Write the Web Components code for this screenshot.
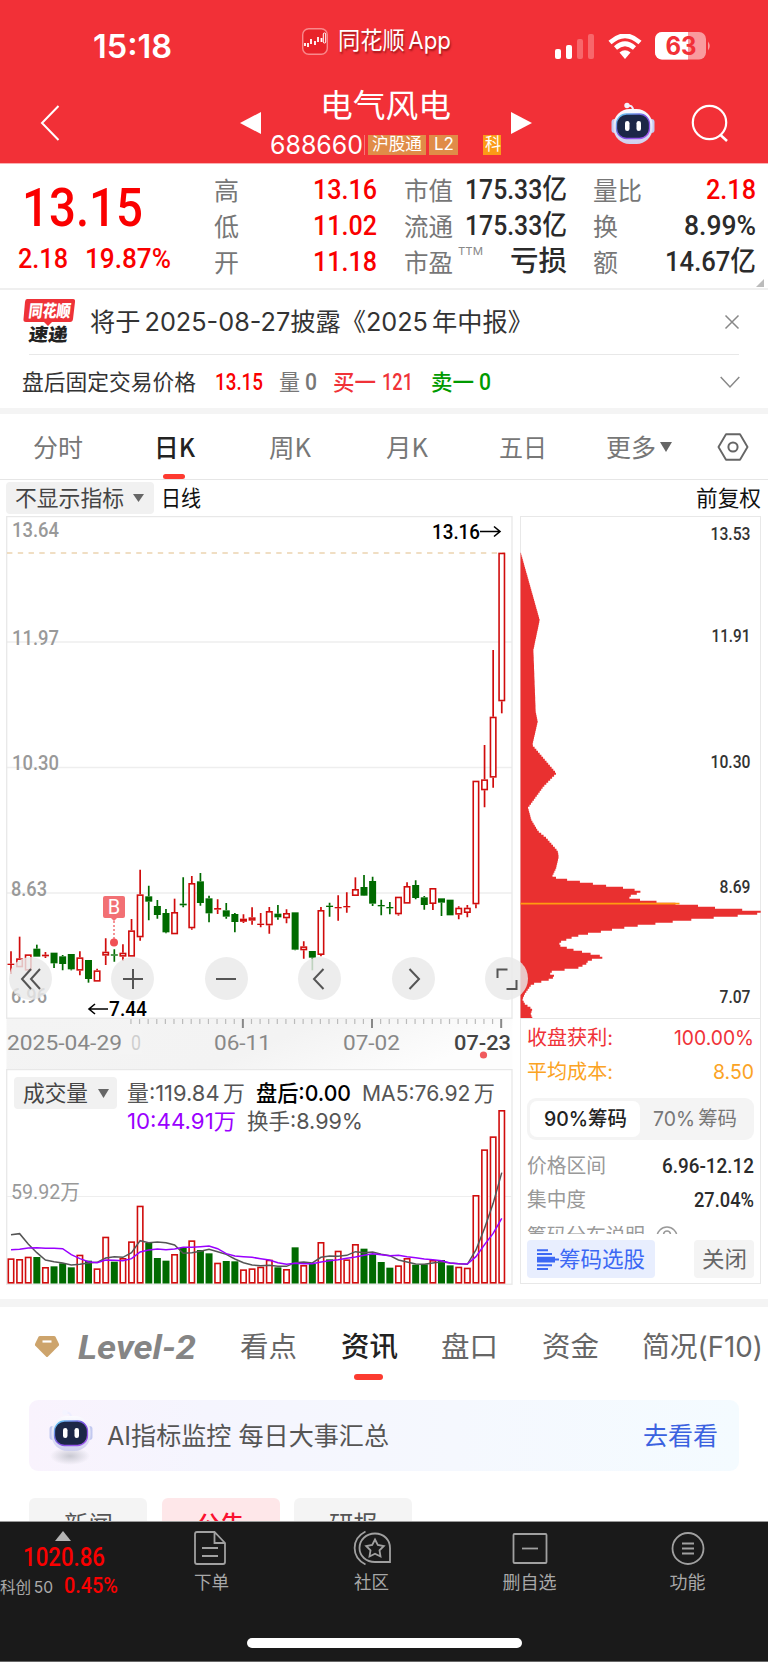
<!DOCTYPE html>
<html lang="zh-CN">
<head>
<meta charset="utf-8">
<title>电气风电 688660</title>
<style>
  html, body { margin: 0; padding: 0; }
  body {
    width: 768px;
    height: 1662px;
    overflow: hidden;
    background: #fff;
    color: #333;
    font-family: Inter, "Noto Sans CJK SC", sans-serif;
    font-size: 22px;
    line-height: 1;
  }
</style>
</head>
<body>
<stock-page></stock-page>

<script>
const DIN = `.din { font-family: Roboto, "Noto Sans CJK SC", sans-serif; font-weight: 500; }`;
const RED = "#fa0000";
const UP = "#d00c0c";
const DOWN = "#006a00";

// Base class: puts the markup and the styles in an open shadow root
class BaseElement extends HTMLElement {
  constructor() {
    super();
    this.attachShadow({ mode: "open" });
  }

  connectedCallback() {
    this.shadowRoot.innerHTML = `<style>:host { display: block; box-sizing: border-box; } ${DIN} ${this.styles()}</style>${this.markup()}`;
  }

  styles() { return ""; }
  markup() { return "<slot></slot>"; }
}

// Text squeezed or stretched horizontally to a given width
class FitText extends HTMLElement {
  constructor() {
    super();
    this.attachShadow({ mode: "open" });
  }

  connectedCallback() {
    const width = Number(this.getAttribute("w"));
    const gap = Number(this.getAttribute("gap") || 0);
    this.shadowRoot.innerHTML = `
      <style>
        :host { display: block; flex: none; width: ${width}px; margin-left: ${gap}px; white-space: nowrap; line-height: 1; word-spacing: -.12em; }
        span { display: inline-block; transform-origin: 0 50%; vertical-align: top; }
      </style>
      <span><slot></slot></span>
    `;
    const span = this.shadowRoot.querySelector("span");
    const natural = span.getBoundingClientRect().width;
    if (natural) {
      span.style.transform = `scaleX(${width / natural})`;
    }
  }
}

class RobotIcon extends BaseElement {
  styles() {
    return `svg { display: block; }`;
  }

  markup() {
    return `
      <svg width="44" height="56" viewBox="0 0 44 56">
        <defs>
          <radialGradient id="shade"><stop offset="0" stop-color="#c9c9d2"/><stop offset="1" stop-color="#c9c9d2" stop-opacity="0"/></radialGradient>
          <linearGradient id="rim" x1="0" y1="0" x2="1" y2="1"><stop offset="0" stop-color="#62d5f0"/><stop offset=".5" stop-color="#7a4de0"/><stop offset="1" stop-color="#a75cf0"/></linearGradient>
          <linearGradient id="shell" x1="0" y1="0" x2="0" y2="1"><stop offset="0" stop-color="#fbfbff"/><stop offset="1" stop-color="#cfd0ee"/></linearGradient>
        </defs>
        ${this.hasAttribute("shadow") ? `<ellipse cx="21" cy="47" rx="20" ry="9" fill="url(#shade)"/>` : ""}
        <path d="M22 9C22 4 20 3 16 4" fill="none" stroke="#eef" stroke-width="2"/>
        <circle cx="16" cy="3.500" r="2.700" fill="#f4f4ff"/>
        <rect x="0.500" y="17" width="6" height="14" rx="3" fill="#c3c9f0"/>
        <rect x="37.500" y="17" width="6" height="14" rx="3" fill="#c3c9f0"/>
        <rect x="2.500" y="7" width="39" height="35" rx="16" fill="url(#shell)"/>
        <rect x="5.500" y="12" width="33" height="24.500" rx="10" fill="#1c2747" stroke="url(#rim)" stroke-width="1.300"/>
        <rect x="14" y="19" width="4.500" height="10" rx="2.200" fill="#fff"/>
        <rect x="25.500" y="19" width="4.500" height="10" rx="2.200" fill="#fff"/>
      </svg>
    `;
  }
}

class PhoneHeader extends BaseElement {
  styles() {
    return `
      :host { height: 164px; padding-top: 21px; background: #f23037; color: #fff; border-bottom: 1px solid #fbb0b2; }
      svg { display: block; flex: none; }
      .status { display: flex; align-items: center; height: 50px; padding-left: 93px; }
      .time { font-size: 32px; font-weight: 600; margin-top: 1px; }
      .app { display: flex; align-items: center; gap: 10px; margin: 0 2px 10px 130px; font-size: 24px; text-shadow: 1px 2px 2px rgba(90, 0, 0, .55); }
      .signal { margin-left: 102px; }
      .wifi { margin-left: 14px; }
      .battery { margin-left: 13px; }
      .title { display: flex; align-items: center; height: 81px; margin-top: 11px; padding-left: 40px; }
      .name { display: flex; flex-direction: column; gap: 10px; width: 231px; margin: 0 10px 0 9px; }
      .name > fit-text { font-size: 32px; margin: 0 auto; height: 34px; }
      .code { display: flex; align-items: center; height: 22px; font-size: 26px; }
      .tag { display: flex; align-items: center; justify-content: center; height: 20px; font-size: 17px; background: #e08c48; overflow: hidden; }
    `;
  }

  markup() {
    return `
      <div class="status">
        <fit-text class="time" w="79">15:18</fit-text>
        <div class="app">
          <svg width="26" height="27" viewBox="0 0 26 27">
            <rect x=".7" y=".7" width="24.600" height="25.600" rx="6" fill="#e8232a" stroke="#f9898c" stroke-width="1.400"/>
            <path d="M3 15v3M6 15v4M9 11v5M13 13v4M16 9v5M19.500 10v4" stroke="#fff" stroke-width="1.800"/>
            <rect x="21.300" y="5" width="2.400" height="10" rx="1" fill="none" stroke="#fff"/>
          </svg>
          <fit-text w="113">同花顺 App</fit-text>
        </div>
        <svg class="signal" width="39" height="25">
          <rect y="15" width="6" height="10" rx="2" fill="#fff"/>
          <rect x="11" y="11" width="6" height="14" rx="2" fill="#fff"/>
          <rect x="22" y="5" width="6" height="20" rx="2" fill="#f7676b"/>
          <rect x="33" width="6" height="25" rx="2" fill="#f7676b"/>
        </svg>
        <svg class="wifi" width="34" height="25" viewBox="0 0 34 25">
          <path d="M2 8.500Q17-5 32 8.500M7.500 14Q17 5.500 26.500 14" fill="none" stroke="#fff" stroke-width="4.600"/>
          <path d="M11.500 18.500Q17 14 22.500 18.500L17 25Z" fill="#fff"/>
        </svg>
        <svg class="battery" width="57" height="28" viewBox="0 0 57 28">
          <clipPath id="cell"><rect width="51" height="27.500" rx="7"/></clipPath>
          <g clip-path="url(#cell)"><rect width="51" height="28" fill="#f99b9e"/><rect width="33" height="28" fill="#fff"/></g>
          <path d="M53 9.500q3.500 4.500 0 9z" fill="#f99b9e"/>
          <text x="10.500" y="22.500" textLength="31" lengthAdjust="spacingAndGlyphs" font-size="25" font-weight="700" fill="#f23037">63</text>
        </svg>
      </div>
      <div class="title">
        <svg width="20" height="38" viewBox="0 0 20 38"><path d="M18.500 2 2 19l16.500 17" fill="none" stroke="#fff" stroke-width="2"/></svg>
        <svg width="21" height="24" style="margin-left:180px"><path d="M0 12 21 1v22z" fill="#fff"/></svg>
        <div class="name">
          <fit-text w="131">电气风电</fit-text>
          <div class="code">
            <fit-text w="93">688660</fit-text>
            <div style="width:1px;height:20px;background:#f7777b;margin:0 3px 0 1px"></div>
            <div class="tag" style="width:58px"><fit-text w="50">沪股通</fit-text></div>
            <div class="tag" style="width:29px;margin-left:3px"><fit-text w="20">L2</fit-text></div>
            <div class="tag" style="width:18px;margin-left:25px;background:#fb9a17;justify-content:flex-start"><fit-text w="16" gap="2">科</fit-text></div>
          </div>
        </div>
        <svg width="21" height="24"><path d="M21 12 0 1v22z" fill="#fff"/></svg>
        <robot-icon style="margin:15px 0 0 79px"></robot-icon>
        <svg width="38" height="38" viewBox="0 0 38 38" style="margin-left:36px"><circle cx="18.500" cy="18.500" r="16.700" fill="none" stroke="#fff" stroke-width="2.200"/><path d="m29.500 31 6.500 6" stroke="#fff" stroke-width="2.500"/></svg>
      </div>
    `;
  }
}

class QuoteStats extends BaseElement {
  styles() {
    return `
      :host { position: relative; display: flex; height: 126px; padding: 8px 12px 0 18px; border-bottom: 2px solid #efefef; }
      .price { width: 196px; color: ${RED}; }
      .last { display: flex; align-items: center; height: 72px; font-size: 53px; }
      .change { display: flex; align-items: center; height: 34px; margin-top: -2px; font-size: 27px; }
      .cols { display: grid; grid-template-columns: 163px 163px 163px; column-gap: 26.500px; grid-auto-rows: 36px; }
      .stat { display: flex; align-items: center; justify-content: space-between; font-size: 28px; color: #2b2b2b; }
      .label { font-size: 25px; color: #777; font-family: "Noto Sans CJK SC"; margin-top: -2px; }
      .up { color: ${RED}; }
      sup { align-self: flex-start; font-size: 11px; color: #888; margin: 2px auto 0 5px; }
      i { position: absolute; right: 4px; bottom: 1px; border: 4.500px solid transparent; border-right-color: #bbb; border-bottom-color: #bbb; }
    `;
  }

  markup() {
    const stats = [
      ["高", 25, "13.16", 64, 1], ["市值", 49, "175.33亿", 102], ["量比", 49, "2.18", 50, 1],
      ["低", 25, "11.02", 64, 1], ["流通", 49, "175.33亿", 102], ["换", 25, "8.99%", 72],
      ["开", 25, "11.18", 64, 1], ["市盈", 49, "亏损", 57], ["额", 25, "14.67亿", 91],
    ];
    return `
      <div class="price">
        <div class="last din"><fit-text w="121" gap="4">13.15</fit-text></div>
        <div class="change din"><fit-text w="50">2.18</fit-text><fit-text w="86" gap="17">19.87%</fit-text></div>
      </div>
      <div class="cols">
        ${stats.map(([label, lw, value, vw, up]) => `
          <div class="stat">
            <fit-text class="label" w="${lw}">${label}</fit-text>
            ${label === "市盈" ? `<sup><fit-text w="25">TTM</fit-text></sup>` : ""}
            <fit-text class="din ${up ? "up" : ""}" w="${vw}">${value}</fit-text>
          </div>`).join("")}
      </div>
      <i></i>
    `;
  }
}

class NoticeList extends BaseElement {
  styles() {
    return `
      :host { height: 124px; border-bottom: 6px solid #f4f4f4; }
      svg { display: block; flex: none; overflow: visible; }
      .row { display: flex; align-items: center; }
      .news { height: 64px; box-sizing: border-box; margin-left: 22px; font-size: 25px; }
      .line { height: 1px; margin: 0 29px; background: #e8e8e8; }
      .fixed { height: 54px; margin-left: 22px; font-size: 22px; }
      .num { font-size: 23px; }
    `;
  }

  markup() {
    return `
      <div class="row news">
        <svg width="54" height="48" viewBox="0 0 54 48" font-family="Noto Sans CJK SC" font-weight="900">
          <path d="M5 1h46q2.500 0 2 3l-2 17q-.3 3-3 3H30l-4 4-4-4H4q-3 0-2.500-3l1.500-17Q3.300 1 5 1z" fill="#ee3238"/>
          <text transform="translate(6 19) skewX(-7)" font-size="17" textLength="42" lengthAdjust="spacingAndGlyphs" fill="#fff">同花顺</text>
          <text transform="translate(6 43) skewX(-7)" font-size="18" textLength="39" lengthAdjust="spacingAndGlyphs" fill="#222">速递</text>
        </svg>
        <fit-text w="443" gap="14">将于 2025-08-27披露《2025 年中报》</fit-text>
        <svg width="14" height="14" style="margin-left:192px"><path d="m.5.500 13 13m0-13-13 13" stroke="#888" stroke-width="1.500"/></svg>
      </div>
      <div class="line"></div>
      <div class="row fixed">
        <fit-text w="174">盘后固定交易价格</fit-text>
        <fit-text class="din num" w="48" gap="19" style="color:${RED}">13.15</fit-text>
        <fit-text w="21" gap="16" style="color:#777">量</fit-text>
        <fit-text class="din num" w="12" gap="5" style="color:#777">0</fit-text>
        <fit-text w="43" gap="16" style="color:#f03238;font-weight:500">买一</fit-text>
        <fit-text class="din num" w="31" gap="6" style="color:#f03238">121</fit-text>
        <fit-text w="43" gap="18" style="color:#009a00;font-weight:500">卖一</fit-text>
        <fit-text class="din num" w="12" gap="5" style="color:#009a00">0</fit-text>
        <svg width="20" height="12" style="margin-left:229px"><path d="m.7 1 9.300 10 9.300-10" fill="none" stroke="#888" stroke-width="1.500"/></svg>
      </div>
    `;
  }
}

class PeriodTabs extends BaseElement {
  styles() {
    return `
      .tabs { position: relative; display: flex; align-items: center; height: 66px; padding: 3px 0 0 33px; box-sizing: border-box; border-bottom: 1px solid #e6e6e6; font-size: 25px; color: #777; font-family: "Noto Sans CJK SC"; }
      .tabs fit-text { margin-top: -4px; }
      .active { font-weight: 500; color: #222; }
      .mark { position: absolute; left: 163px; bottom: 0; width: 22px; height: 5px; border-radius: 2.500px; background: #fe3a30; }
      .tools { display: flex; align-items: center; height: 36px; padding-left: 6px; color: #111; }
      .chip { display: flex; align-items: center; width: 148px; height: 32px; border-radius: 4px; background: #f1f1f1; color: #444; }
      svg { display: block; flex: none; }
    `;
  }

  markup() {
    return `
      <div class="tabs">
        <fit-text w="50">分时</fit-text>
        <fit-text class="active" w="41" gap="71">日K</fit-text>
        <fit-text w="42" gap="74">周K</fit-text>
        <fit-text w="42" gap="75">月K</fit-text>
        <fit-text w="48" gap="71">五日</fit-text>
        <fit-text w="50" gap="59">更多</fit-text>
        <svg width="12" height="10" style="margin:-2px 0 0 4px"><path d="M0 0h12L6 10z" fill="#666"/></svg>
        <svg width="32" height="28" viewBox="0 0 32 28" style="margin:0 0 2px 45px"><path d="M9 1.300h14L30.500 14 23 26.700H9L1.500 14z" fill="none" stroke="#666" stroke-width="1.900" stroke-linejoin="round"/><circle cx="16" cy="14" r="4.600" fill="none" stroke="#666" stroke-width="2"/></svg>
        <div class="mark"></div>
      </div>
      <div class="tools">
        <div class="chip"><fit-text w="109" gap="9">不显示指标</fit-text><svg width="11" height="8" style="margin-left:9px"><path d="M0 0h11L5.500 8z" fill="#666"/></svg></div>
        <fit-text w="40" gap="7">日线</fit-text>
        <fit-text w="65" gap="495">前复权</fit-text>
      </div>
    `;
  }
}

// x of the centre of bar i
const barX = (i) => 11 + i * 8.61;

// Candles: direction, high, top, bottom, low, in thirds of a pixel below y=840
const CANDLES = `r 334 371 375 402|r 290 355 382 382|r 343 343 392 392|g 314 326 350 350|r 336 344 349 354|g 338 338 370 384|g 345 349 372 391|g 342 342 388 391|r 334 352 392 406|g 360 360 417 428|r 386 391 425 425|r 295 335 347 375|g 328 343 347 365|r 313 338 350 363|r 237 271 350 350|r 89 163 292 302|g 137 169 185 241|g 180 198 225 236|g 207 219 277 280|r 176 216 283 283|g 112 191 196 202|r 108 129 265 269|g 99 124 189 197|g 167 175 220 247|r 178 204 209 222|g 189 211 230 236|g 219 222 246 277|r 223 236 245 249|r 202 232 242 254|r 219 251 255 262|r 201 213 256 281|g 195 221 232 239|r 208 219 235 250|g 217 217 329 331|r 304 319 331 356|g 333 333 353 391|r 201 210 345 349|g 188 197 201 230|r 166 201 205 242|r 157 198 202 218|r 112 147 168 168|g 105 141 167 168|g 110 123 191 198|g 179 195 199 226|g 186 201 205 223|r 170 170 223 227|r 127 138 191 191|g 121 135 174 178|g 168 172 195 209|r 144 144 192 210|g 175 175 188 228|g 179 179 226 226|r 199 203 224 238|r 195 203 219 232|r -178 -178 193 205|r -285 -182 -149 -98|r -570 -370 -187 -157|r -862 -862 -416 -380`
  .split("|").map((c) => c.split(" "));

function drawCandle([dir, ...v], i) {
  const [high, top, bottom, low] = v.map((n) => 840 + n / 3);
  const x = barX(i);
  const color = dir === "r" ? UP : DOWN;
  const wick = `<path d="M${x} ${high}V${top}M${x} ${bottom}V${low}" stroke="${color}" stroke-width="1.700"/>`;
  if (dir === "g" || bottom - top < 2.5) {
    return `${wick}<rect x="${x - 3.5}" y="${top}" width="7" height="${bottom - top}" fill="${color}"/>`;
  }
  return `${wick}<rect x="${x - 2.7}" y="${top + 0.8}" width="5.400" height="${Math.max(bottom - top - 1.6, 1.5)}" fill="#fff" stroke="${color}" stroke-width="1.600"/>`;
}

class KlineChart extends BaseElement {
  styles() {
    return `
      svg { display: block; font-family: Roboto, sans-serif; font-weight: 500; font-size: 21px; }
      .axis { fill: #999; }
      .date { fill: #888; font-weight: 400; font-size: 20px; }
    `;
  }

  markup() {
    const label = (x, y, w, text, cls = "axis") =>
      `<text class="${cls}" x="${x}" y="${y}" textLength="${w}" lengthAdjust="spacingAndGlyphs">${text}</text>`;
    let ticks = "";
    for (let i = 14; i < 58; i++) {
      const major = i === 27 || i === 42 || i === 57;
      ticks += `<path d="M${barX(i) - 0.6} 1019v${major ? 9 : 5}" stroke="${major ? "#888" : "#bbb"}" stroke-width="${major ? 2 : 1.200}"/>`;
    }
    return `
      <svg width="514" height="554" viewBox="0 516 514 554">
        <defs><linearGradient id="band" x1="0" y1="0" x2="1" y2=".25"><stop offset="0" stop-color="#f4f4f4"/><stop offset=".6" stop-color="#f3f3f3"/><stop offset="1" stop-color="#fdfdfd"/></linearGradient></defs>
        <rect x="6.500" y="1018" width="506" height="52" fill="url(#band)"/>
        <path d="M7 642H512M7 767.500H512M7 893H512" stroke="#eee" stroke-width="1.300"/>
        <rect x="6.700" y="516.600" width="505.300" height="501.600" fill="none" stroke="#e8e8e8" stroke-width="1.300"/>
        <path d="M7 553H505" stroke="#ecd3b0" stroke-width="1.600" stroke-dasharray="5.400 5.370"/>
        ${label(12, 537, 47, "13.64")}
        ${label(12, 645, 47, "11.97")}
        ${label(12, 770, 47, "10.30")}
        ${label(11, 896, 36, "8.63")}
        ${label(11, 1003, 36, "6.96")}
        ${CANDLES.map(drawCandle).join("")}
        ${label(432, 539, 48, "13.16", "hi")}
        <path d="M480 531.500h19m-5-5 6 5-6 5" fill="none" stroke="#000" stroke-width="1.600"/>
        ${label(109, 1016, 38, "7.44", "hi")}
        <path d="M108 1009H89m6-5-6 5 6 5" fill="none" stroke="#000" stroke-width="1.600"/>
        <path d="M105 896h18q2 0 2 2v18q0 2-2 2h-6l-3 3-3-3h-6q-2 0-2-2v-18q0-2 2-2z" fill="#f27074"/>
        <text x="114" y="914" text-anchor="middle" font-size="20" font-weight="400" fill="#fff">B</text>
        <path d="M114 921v19" stroke="#f27074" stroke-width="1.500" stroke-dasharray="2 2"/>
        <circle cx="114" cy="942.500" r="4" fill="#f05055"/>
        ${ticks}
        ${label(131, 1050, 10, "0", "date")}
        <rect x="118" y="1030" width="24" height="24" fill="#f4f4f4" opacity=".65"/>
        ${label(7, 1050, 115, "2025-04-29", "date")}
        ${label(214, 1050, 57, "06-11", "date")}
        ${label(343, 1050, 57, "07-02", "date")}
        <text x="454" y="1050" textLength="57" lengthAdjust="spacingAndGlyphs" font-size="20" fill="#444">07-23</text>
        <circle cx="483.500" cy="1055" r="3.600" fill="#f05a5e"/>
      </svg>
    `;
  }
}

// Volume bar tops, in thirds of a pixel below y=1060
const VOLUMES = `595r 597r 590r 591g 621r 619g 610g 622g 584r 602g 625r 530r 605g 594r 544r 437r 549g 594g 602g 582r 563g 541r 570g 580g 608r 603g 604g 628r 625r 620r 599r 622g 627r 562g 615r 612g 546r 598g 572r 598r 552r 566g 583g 606g 623g 616r 594r 614g 613g 600r 600g 616g 620r 623r 405r 268r 229r 150r`.split(" ");
const MA5 = [524, 521, 552, 578, 600, 605, 609, 615, 613, 609, 607, 594, 590, 592, 578, 542, 548, 546, 548, 555, 580, 578, 574, 568, 575, 583, 597, 608, 615, 617, 616, 619, 619, 608, 606, 609, 592, 588, 589, 586, 575, 578, 576, 583, 587, 600, 606, 612, 613, 609, 605, 609, 611, 613, 570, 505, 430, 338];
const MA10 = [569, 568, 564, 563, 565, 565, 566, 584, 596, 605, 608, 600, 601, 602, 596, 576, 570, 567, 569, 567, 562, 562, 560, 558, 566, 581, 588, 590, 592, 596, 600, 608, 613, 610, 611, 611, 606, 602, 599, 595, 591, 586, 581, 584, 587, 586, 590, 593, 597, 599, 602, 609, 611, 612, 590, 554, 520, 475];

class VolumeChart extends BaseElement {
  styles() {
    return `
      :host { position: relative; height: 215px; }
      svg.plot { position: absolute; left: 0; top: 0; font-family: Roboto, "Noto Sans CJK SC", sans-serif; font-size: 21px; }
      .legend { position: relative; display: flex; align-items: center; height: 32px; padding: 8px 0 0 14px; color: #555; }
      .chip { display: flex; align-items: center; width: 103px; height: 32px; border-radius: 4px; background: #f1f1f1; color: #444; }
      .second { height: 24px; padding: 0 0 0 127px; }
      .dark { color: #000; font-weight: 500; }
    `;
  }

  markup() {
    const line = (values, color) =>
      `<polyline points="${values.map((v, i) => `${barX(i)},${1060 + v / 3}`).join(" ")}" fill="none" stroke="${color}" stroke-width="1.500"/>`;
    const bars = VOLUMES.map((item, i) => {
      const top = 1060 + parseInt(item) / 3;
      const x = barX(i);
      return item.endsWith("g")
        ? `<rect x="${x - 3.5}" y="${top}" width="7" height="${1283.5 - top}" fill="${DOWN}"/>`
        : `<rect x="${x - 2.7}" y="${top + 0.8}" width="5.400" height="${1282 - top}" fill="#fff" stroke="${UP}" stroke-width="1.600"/>`;
    });
    return `
      <svg class="plot" width="514" height="216" viewBox="0 1069 514 216">
        <rect x="6.700" y="1069.600" width="505.300" height="214.600" fill="none" stroke="#e8e8e8" stroke-width="1.300"/>
        <path d="M7 1196.500H512" stroke="#eee" stroke-width="1.200"/>
        <text x="11" y="1199" textLength="69" lengthAdjust="spacingAndGlyphs" fill="#999">59.92万</text>
        ${bars.join("")}
        ${line(MA5, "#555")}
        ${line(MA10, "#9a00ff")}
      </svg>
      <div class="legend">
        <div class="chip"><fit-text w="65" gap="9">成交量</fit-text><svg width="11" height="9" style="margin-left:10px"><path d="M0 0h11L5.500 9z" fill="#666"/></svg></div>
        <fit-text w="118" gap="10">量:119.84 万</fit-text>
        <fit-text class="dark" w="95" gap="11">盘后:0.00</fit-text>
        <fit-text w="133" gap="11">MA5:76.92 万</fit-text>
      </div>
      <div class="legend second">
        <fit-text w="109" style="color:#9a00ff">10:44.91万</fit-text>
        <fit-text w="116" gap="11">换手:8.99%</fit-text>
      </div>
    `;
  }
}

// Outline of the chip distribution: width and price position, in thirds of a pixel
const CHIPS = [[0, 127], [57, 330], [38, 420], [45, 605], [51, 635], [35, 705], [107, 790], [68, 830], [22, 893], [32, 930], [52, 963], [76, 983], [111, 1023], [114, 1040], [106, 1075], [95, 1098], [108, 1104], [158, 1112], [223, 1122], [263, 1128], [333, 1136], [362, 1146], [343, 1153], [321, 1160], [331, 1166], [385, 1172], [430, 1178], [476, 1182], [543, 1188], [583, 1193], [646, 1197], [720, 1205], [706, 1213], [651, 1217], [591, 1222], [531, 1227], [473, 1233], [413, 1240], [351, 1247], [317, 1252], [274, 1259], [247, 1264], [202, 1271], [163, 1279], [116, 1297], [116, 1306], [154, 1318], [214, 1332], [256, 1341], [228, 1346], [204, 1351], [196, 1362], [173, 1373], [118, 1381], [81, 1387], [100, 1397], [95, 1406], [58, 1416], [33, 1423], [13, 1450], [5, 1468], [13, 1482], [35, 1497], [30, 1512], [36, 1526]];

class ChipPanel extends BaseElement {
  styles() {
    return `
      :host { width: 241px; height: 768px; border: 1px solid #e8e8e8; position: relative; }
      svg { display: block; flex: none; }
      .dist { margin: -1px 0 0 -1px; font-family: Roboto, sans-serif; font-weight: 500; font-size: 18.500px; }
      .body { padding: 0 6px; border-top: 1px solid #e8e8e8; height: 265px; box-sizing: border-box; font-size: 20px; }
      .row { display: flex; align-items: center; justify-content: space-between; height: 34px; }
      .row.first { padding-top: 2px; }
      .seg { display: flex; align-items: center; height: 42px; box-sizing: border-box; margin: 9px 0; padding: 3px; border-radius: 9px; background: #f4f4f4; color: #777; }
      .on { display: flex; align-items: center; justify-content: center; width: 110px; height: 36px; border-radius: 7px; background: #fff; color: #222; font-weight: 500; }
      .grey { color: #999; }
      .din { color: #2b2b2b; }
      .clip { display: flex; height: 8px; margin-top: 9px; overflow: hidden; color: #999; }
      .actions { display: flex; justify-content: space-between; margin-top: 6px; font-size: 22px; }
      .btn { display: flex; align-items: center; justify-content: center; height: 38px; border-radius: 4px; background: #f4f4f4; color: #666; }
    `;
  }

  widthAt(y) {
    const i = CHIPS.findIndex((p) => p[1] >= y);
    if (i <= 0) return 0;
    const [w0, y0] = CHIPS[i - 1];
    const [w1, y1] = CHIPS[i];
    return w0 + (w1 - w0) * (y - y0) / (y1 - y0);
  }

  markup() {
    // One horizontal bar for each price step
    let d = "M520.500 552.700";
    for (let y = 128; y < 1525; y += 6) {
      d += `H${(520.7 + this.widthAt(y + 3) / 3).toFixed(1)}V${510 + Math.min(y + 6, 1525) / 3}`;
    }
    const prices = [["13.53", 540, 40], ["11.91", 642, 39], ["10.30", 768, 40], ["8.69", 893, 31], ["7.07", 1003, 31]];
    return `
      <svg class="dist" width="241" height="502" viewBox="520 516 241 502">
        <path d="${d}H520.500z" fill="#e93030"/>
        <path d="M520.500 903.700H679.500" stroke="#ff9a10" stroke-width="1.800"/>
        ${prices.map(([t, y, w]) => `<text x="${750.5 - w}" y="${y}" textLength="${w}" lengthAdjust="spacingAndGlyphs" fill="#333">${t}</text>`).join("")}
      </svg>
      <div class="body">
        <div class="row first" style="color:#f03238"><fit-text w="86">收盘获利:</fit-text><fit-text w="80">100.00%</fit-text></div>
        <div class="row" style="color:#fba324"><fit-text w="86">平均成本:</fit-text><fit-text w="41">8.50</fit-text></div>
        <div class="seg"><div class="on"><fit-text w="83">90%筹码</fit-text></div><fit-text w="84" gap="13">70% 筹码</fit-text></div>
        <div class="row"><fit-text class="grey" w="79">价格区间</fit-text><fit-text class="din" w="92">6.96-12.12</fit-text></div>
        <div class="row"><fit-text class="grey" w="59">集中度</fit-text><fit-text class="din" w="60">27.04%</fit-text></div>
        <div class="clip"><fit-text w="118">筹码分布说明</fit-text><svg width="22" height="22" style="margin-left:11px"><circle cx="11" cy="11" r="10" fill="none" stroke="#999" stroke-width="1.500"/><path d="M7.500 8.500q.5-3.500 3.500-3.500t3.500 3-3.500 4v2" fill="none" stroke="#999" stroke-width="1.500"/></svg></div>
        <div class="actions">
          <div class="btn" style="width:128px;background:#e8eefe;color:#3c68f4">
            <svg width="22" height="21"><path d="M0 1.200h11M0 5h15M0 8.800h18M0 12.400h18M0 16.200h15M0 20h11M0 10.600h22" stroke="#3c68f4" stroke-width="2"/></svg>
            <fit-text w="86">筹码选股</fit-text>
          </div>
          <div class="btn" style="width:60px"><fit-text w="45">关闭</fit-text></div>
        </div>
      </div>
    `;
  }
}

class ChartArea extends BaseElement {
  styles() {
    return `
      :host { position: relative; display: flex; height: 783px; }
      .left { width: 520px; }
      volume-chart { margin-top: -1px; }
      .controls { position: absolute; left: 9px; top: 441px; display: flex; gap: 50.600px; }
      .round { display: flex; align-items: center; justify-content: center; width: 43px; height: 43px; border-radius: 50%; background: rgba(233, 233, 233, .82); }
      .round:first-child { margin-right: 8.500px; }
      svg { display: block; }
      path { fill: none; stroke: #555; stroke-width: 2; }
    `;
  }

  markup() {
    const icons = [
      "M21 2 12 12l9 10M12 2 3 12l9 10", "M12 2v20M2 12h20", "M2 12h20",
      "M15.500 2 6 12l9.500 10", "M8.500 2 18 12l-9.500 10", "M2.500 11V2.500h10M21.500 13v9h-10",
    ];
    return `
      <div class="left">
        <kline-chart></kline-chart>
        <volume-chart></volume-chart>
      </div>
      <chip-panel></chip-panel>
      <div class="controls">
        ${icons.map((d) => `<div class="round"><svg width="24" height="24"><path d="${d}"/></svg></div>`).join("")}
      </div>
    `;
  }
}

class InfoSection extends BaseElement {
  styles() {
    return `
      :host { height: 222px; overflow: hidden; border-top: 8px solid #f4f4f4; }
      svg { display: block; flex: none; }
      .tabs { position: relative; display: flex; align-items: center; height: 78px; padding: 1px 0 0 34px; box-sizing: border-box; font-size: 28px; color: #666; }
      .level { font: italic 700 34px Roboto, sans-serif; color: #858585; }
      .active { color: #222; font-weight: 500; }
      .mark { position: absolute; left: 354px; top: 67px; width: 29px; height: 6px; border-radius: 3px; background: #fc3b30; }
      .banner { display: flex; align-items: center; height: 71px; box-sizing: border-box; margin: 15px 29px 0; padding: 2px 21px 0 20px; border-radius: 9px; background: linear-gradient(90deg, #f9f3fd, #f5f5fe 25%, #f5f8fe 60%, #f4fbff); font-size: 25px; color: #555; }
      .banner fit-text { word-spacing: 0; }
      .banner .go { color: #3b62e0; margin-left: auto; }
      .pills { display: flex; gap: 14.500px; margin: 27px 29px 0; font-size: 24px; color: #555; }
      .pill { display: flex; justify-content: center; width: 118px; height: 50px; box-sizing: border-box; padding-top: 15px; border-radius: 6px; background: #f4f4f4; }
      .pill.on { background: #fee7e9; color: #fa1230; font-weight: 500; }
    `;
  }

  markup() {
    return `
      <div class="tabs">
        <svg width="26" height="23" viewBox="0 0 26 23"><path d="M6 1h14q1 0 1.500.7L25 9q.3 1-.3 1.700L14 21.500q-1 1-2 0L1.300 10.700Q.7 10 1 9l3.500-7.300Q5 1 6 1z" fill="#cda46c"/><path d="M8.500 6.500h9" stroke="#fff" stroke-width="2.200"/></svg>
        <fit-text class="level" w="118" gap="18">Level-2</fit-text>
        <fit-text w="57" gap="44">看点</fit-text>
        <fit-text class="active" w="57" gap="44">资讯</fit-text>
        <fit-text w="57" gap="43">盘口</fit-text>
        <fit-text w="57" gap="44">资金</fit-text>
        <fit-text w="121" gap="43">简况(F10)</fit-text>
        <div class="mark"></div>
      </div>
      <div class="banner">
        <robot-icon shadow></robot-icon>
        <fit-text w="282" gap="14">AI指标监控 每日大事汇总</fit-text>
        <fit-text class="go" w="75">去看看</fit-text>
      </div>
      <div class="pills">
        <div class="pill"><fit-text w="49">新闻</fit-text></div>
        <div class="pill on"><fit-text w="48">公告</fit-text></div>
        <div class="pill"><fit-text w="49">研报</fit-text></div>
      </div>
    `;
  }
}

class BottomBar extends BaseElement {
  styles() {
    return `
      :host { position: relative; height: 141px; background: #1a1a1a; border-top: 1px solid #999; border-bottom: 1px solid #666; color: #a8a8a8; }
      .bar { display: grid; grid-template-columns: 131px 160px 161px 155px 161px; height: 84px; }
      .item { display: flex; flex-direction: column; align-items: center; padding-top: 8px; font-size: 18px; }
      .item svg { height: 36px; margin-bottom: 8px; fill: none; stroke: #a0a0a0; stroke-width: 1.800; }
      .index { display: flex; flex-direction: column; color: ${RED}; padding-top: 9px; }
      .index > svg { margin-left: 55px; }
      .value { font-size: 25px; margin-top: 4px; }
      .small { display: flex; align-items: center; margin-top: 5px; font-size: 22px; }
      .small .grey { font-size: 16px; color: #aaa; margin-top: 1px; }
      .home { width: 275px; height: 10px; border-radius: 5px; background: #fff; margin: 32px 0 0 247px; }
    `;
  }

  markup() {
    return `
      <div class="bar">
        <div class="index">
          <svg width="16" height="10"><path d="M8 0 16 10H0z" fill="#b5b5b5"/></svg>
          <fit-text class="value din" w="82" gap="23">1020.86</fit-text>
          <div class="small"><fit-text class="grey" w="53">科创 50</fit-text><fit-text class="din" w="54" gap="11">0.45%</fit-text></div>
        </div>
        <div class="item"><svg width="34" height="36" style="margin-right:3px"><path d="M4 2h17.500L32 13v19q0 2-2 2H4q-2 0-2-2V4q0-2 2-2zM21.500 2v11H32M9 18h16M9 26h16"/></svg><fit-text w="35">下单</fit-text></div>
        <div class="item"><svg width="38" height="36"><path d="M22 3.500c9 0 15 6.500 15 14.500v14H22C13 32 6.500 26 6.500 18S13 3.500 22 3.500zM12.500 1.500C-2 9-2 27 12.500 34.500"/><path d="m22 9.500 2.800 5.500 6 1-4.300 4.300 1 6.200-5.500-2.800-5.500 2.800 1-6.200L13.200 16l6-1z"/></svg><fit-text w="35">社区</fit-text></div>
        <div class="item"><svg width="36" height="36"><rect x="1.500" y="4" width="33" height="29" rx="1"/><path d="M10 18.500h16"/></svg><fit-text w="54">删自选</fit-text></div>
        <div class="item"><svg width="36" height="36"><circle cx="18" cy="18.500" r="15.500"/><path d="M12 13.500h12M12 18.500h12M12 23.500h12"/></svg><fit-text w="36">功能</fit-text></div>
      </div>
      <div class="home"></div>
    `;
  }
}

class StockPage extends BaseElement {
  styles() {
    return `:host { width: 768px; height: 1662px; overflow: hidden; }`;
  }

  markup() {
    return `
      <phone-header></phone-header>
      <quote-stats></quote-stats>
      <notice-list></notice-list>
      <period-tabs></period-tabs>
      <chart-area></chart-area>
      <info-section></info-section>
      <bottom-bar></bottom-bar>
    `;
  }
}

// Register custom elements
customElements.define("robot-icon", RobotIcon);
customElements.define("phone-header", PhoneHeader);
customElements.define("quote-stats", QuoteStats);
customElements.define("notice-list", NoticeList);
customElements.define("period-tabs", PeriodTabs);
customElements.define("kline-chart", KlineChart);
customElements.define("volume-chart", VolumeChart);
customElements.define("chip-panel", ChipPanel);
customElements.define("chart-area", ChartArea);
customElements.define("info-section", InfoSection);
customElements.define("bottom-bar", BottomBar);
customElements.define("stock-page", StockPage);
// Last, so that the surrounding boxes exist when the texts are measured
customElements.define("fit-text", FitText);
</script>
</body>
</html>
